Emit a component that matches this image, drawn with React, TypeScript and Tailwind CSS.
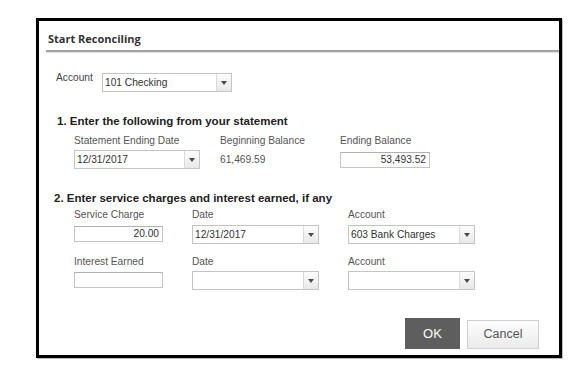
function Arrow() {
  return (
    <svg width="6" height="4" viewBox="0 0 6 4">
      <path d="M0 0 L6 0 L3 4 Z" fill="#4a4a4a" />
    </svg>
  );
}

function Select({ value, width }: { value?: string; width: string }) {
  return (
    <div className={`${width} h-[19px] flex border border-[#c4c4c4] bg-white`}>
      <span className="flex-1 pl-[2px] leading-[17px] text-[#333]">{value}</span>
      <div className="w-[15px] flex items-center justify-center border-l border-[#dadada] bg-gradient-to-b from-[#fcfcfc] to-[#e8e8e8]">
        <Arrow />
      </div>
    </div>
  );
}

function Input({ value, width }: { value?: string; width: string }) {
  return (
    <div
      className={`${width} h-[16px] border border-[#c4c4c4] border-t-[#b0b0b0] bg-white text-right pr-[3px] leading-[14px] text-[#333]`}
    >
      {value}
    </div>
  );
}

export default function App() {
  return (
    <div className="w-[586px] h-[379px] bg-white pt-[18px] pl-[36px] font-['Liberation_Sans',Arial,sans-serif] text-[10.2px]">
      {/* Dialog frame */}
      <div className="w-[526px] h-[340px] border-[3px] border-black bg-white flex flex-col shadow-[1px_1px_0_#bbb]">
        {/* Header */}
        <div className="ml-[7px] pl-[2px] pt-[10px] pb-[3px] border-b-2 border-[#a2a2a2]">
          <span className="font-['Open_Sans',sans-serif] font-bold text-[11px] leading-[15px] text-[#333]">
            Start Reconciling
          </span>
        </div>
        <div className="ml-[7px] h-px bg-[#e2e2e2]" />

        {/* Account row */}
        <div className="mt-[19px] ml-[17px] flex items-start">
          <span className="w-[46px] leading-[12px] text-[#444]">Account</span>
          <div className="mt-[1px]">
            <Select value="101 Checking" width="w-[130px]" />
          </div>
        </div>

        {/* Section 1 */}
        <div className="mt-[22px] ml-[18px] font-bold text-[11.5px] leading-[14px] text-[#222]">
          1. Enter the following from your statement
        </div>
        <div className="mt-[7px] ml-[35px] grid grid-cols-[146px_120px_auto] items-start">
          <div className="flex flex-col gap-[3px]">
            <span className="leading-[12px] text-[#555]">Statement Ending Date</span>
            <Select value="12/31/2017" width="w-[126px]" />
          </div>
          <div className="flex flex-col gap-[7px]">
            <span className="leading-[12px] text-[#555]">Beginning Balance</span>
            <span className="leading-[12px] text-[#555]">61,469.59</span>
          </div>
          <div className="flex flex-col gap-[5px]">
            <span className="leading-[12px] text-[#555]">Ending Balance</span>
            <Input value="53,493.52" width="w-[90px]" />
          </div>
        </div>

        {/* Section 2 */}
        <div className="mt-[22px] ml-[15px] font-bold text-[11.5px] leading-[14px] text-[#222]">
          2. Enter service charges and interest earned, if any
        </div>
        <div className="mt-[4px] ml-[35px] grid grid-cols-[118px_156px_auto] items-start gap-y-[12px]">
          <div className="flex flex-col gap-[5px]">
            <span className="leading-[12px] text-[#555]">Service Charge</span>
            <Input value="20.00" width="w-[89px]" />
          </div>
          <div className="flex flex-col gap-[4px]">
            <span className="leading-[12px] text-[#555]">Date</span>
            <Select value="12/31/2017" width="w-[127px]" />
          </div>
          <div className="flex flex-col gap-[4px]">
            <span className="leading-[12px] text-[#555]">Account</span>
            <Select value="603 Bank Charges" width="w-[127px]" />
          </div>

          <div className="flex flex-col gap-[4px]">
            <span className="leading-[12px] text-[#555]">Interest Earned</span>
            <Input width="w-[89px]" />
          </div>
          <div className="flex flex-col gap-[3px]">
            <span className="leading-[12px] text-[#555]">Date</span>
            <Select width="w-[127px]" />
          </div>
          <div className="flex flex-col gap-[3px]">
            <span className="leading-[12px] text-[#555]">Account</span>
            <Select width="w-[127px]" />
          </div>
        </div>

        {/* Buttons */}
        <div className="mt-[28px] mr-[20px] flex justify-end items-start gap-[7px]">
          <button className="w-[55px] h-[31px] bg-[#5e5e5e] text-white text-[13px]">OK</button>
          <button className="mt-[2px] w-[72px] h-[29px] border border-[#cfcfcf] bg-gradient-to-b from-[#fdfdfd] to-[#ebebeb] text-[#555] text-[12.5px]">
            Cancel
          </button>
        </div>
      </div>
    </div>
  );
}
